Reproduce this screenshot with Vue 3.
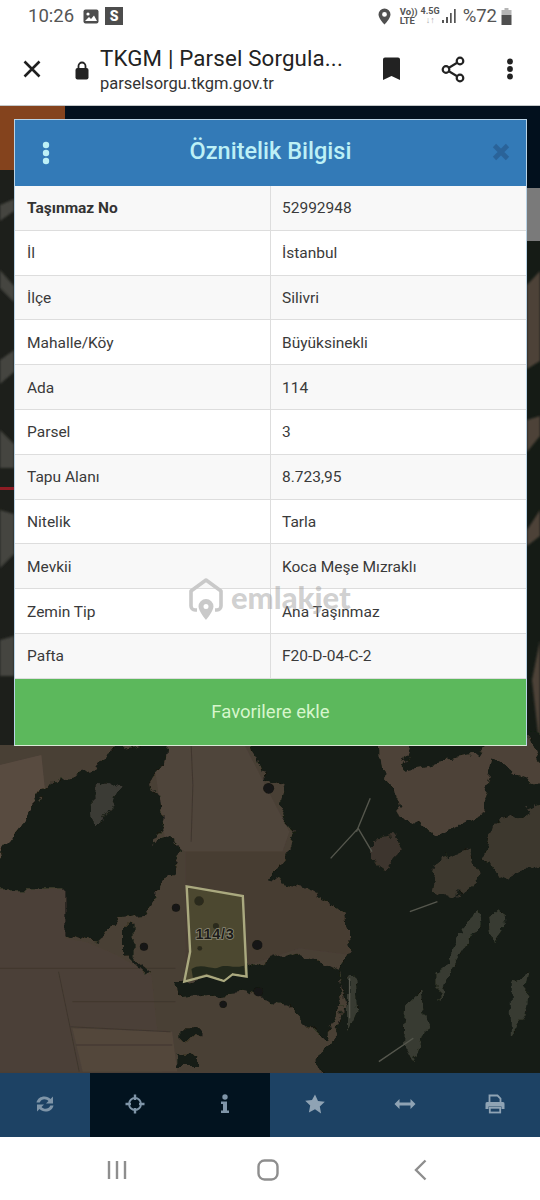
<template>
  <div class="page">
    <div class="status-bar">
      <div class="status-left">
        <span class="clock">10:26</span>
        <svg class="pic-icon" width="16" height="15" viewBox="0 0 16 15">
          <rect x="0.5" y="0.5" width="15" height="14" rx="2" fill="#4d4d4d" />
          <circle cx="5" cy="5" r="1.6" fill="#fff" />
          <path d="M2 12l4-4 2 2 3-3.5 3 5.5z" fill="#fff" />
        </svg>
        <span class="s-badge">S</span>
      </div>
      <div class="status-right">
        <svg width="13" height="17" viewBox="0 0 13 17">
          <path d="M6.5.5a6 6 0 0 0-6 6c0 4 6 10 6 10s6-6 6-10a6 6 0 0 0-6-6zm0 8.300a2.400 2.400 0 1 1 0-4.800 2.400 2.400 0 0 1 0 4.800z" fill="#4f4f4f" />
        </svg>
        <div class="net-label vo">Vo))<br />LTE</div>
        <div class="net-label g45">4.5G<br /><span class="arrows">↓↑</span></div>
        <svg class="signal" width="14" height="16" viewBox="0 0 14 16">
          <rect x="0" y="12" width="2" height="3" fill="#555" />
          <rect x="4" y="9" width="2" height="6" fill="#555" />
          <rect x="8" y="5" width="1.7" height="10" fill="#555" />
          <rect x="12" y="1" width="1.7" height="14" fill="#555" />
        </svg>
        <span class="percent">%72</span>
        <svg width="11" height="17" viewBox="0 0 11 17">
          <rect x="3.5" y="0" width="4" height="2" fill="#b5b5b5" />
          <rect x="0.5" y="2" width="10" height="5" fill="#b5b5b5" />
          <rect x="0.5" y="7" width="10" height="10" fill="#4f4f4f" />
        </svg>
      </div>
    </div>

    <div class="browser-bar">
      <svg class="close-icon" width="20" height="20" viewBox="0 0 20 20">
        <path d="M2.5 2.5l15 15M17.5 2.5l-15 15" stroke="#1f1f1f" stroke-width="2.6" fill="none" />
      </svg>
      <svg class="lock-icon" width="14" height="19" viewBox="0 0 14 19">
        <path d="M3.5 8V5a3.500 3.500 0 0 1 7 0v3" stroke="#222" stroke-width="1.8" fill="none" />
        <rect x="0.5" y="7" width="13" height="11.5" rx="2" fill="#222" />
      </svg>
      <div class="url-block">
        <div class="page-title">TKGM | Parsel Sorgula...</div>
        <div class="page-url">parselsorgu.tkgm.gov.tr</div>
      </div>
      <svg class="bookmark" width="19" height="24" viewBox="0 0 19 24">
        <path d="M1 2.500a2 2 0 0 1 2-2h13a2 2 0 0 1 2 2V23l-8.500-4L1 23z" fill="#222" />
      </svg>
      <svg class="share" width="24" height="27" viewBox="0 0 24 27">
        <path d="M19 5L5 13.500 19 22" stroke="#222" stroke-width="2.2" fill="none" />
        <circle cx="19" cy="5" r="3.3" fill="#fff" stroke="#222" stroke-width="2.2" />
        <circle cx="5" cy="13.5" r="3.3" fill="#fff" stroke="#222" stroke-width="2.2" />
        <circle cx="19" cy="22" r="3.3" fill="#fff" stroke="#222" stroke-width="2.2" />
      </svg>
      <svg class="more" width="8" height="22" viewBox="0 0 8 22">
        <circle cx="4" cy="3.5" r="2.9" fill="#222" />
        <circle cx="4" cy="11" r="2.9" fill="#222" />
        <circle cx="4" cy="18.5" r="2.9" fill="#222" />
      </svg>
    </div>

    <div class="map">
      <svg class="map-art" width="540" height="967" viewBox="0 106 540 967">
        <defs>
          <filter id="soft"><feGaussianBlur stdDeviation="1.1" /></filter>
          <filter id="rough" x="-5%" y="-5%" width="110%" height="110%">
            <feTurbulence type="fractalNoise" baseFrequency="0.022" numOctaves="3" seed="4" result="n" />
            <feDisplacementMap in="SourceGraphic" in2="n" scale="46" xChannelSelector="R" yChannelSelector="G" />
            <feGaussianBlur stdDeviation="1.6" />
          </filter>
        </defs>
        <rect x="0" y="106" width="540" height="967" fill="#4a3f36" />
        <rect x="0" y="106" width="540" height="82" fill="#02101d" />
        <rect x="0" y="106" width="65" height="64" fill="#84431d" />
        <rect x="0" y="170" width="14" height="580" fill="#1d1f1b" />
        <path d="M0 205l14-6v12l-14 10zM0 270l14 16v16l-14-14zM0 360l14-10v22l-14 12zM0 430l14 14v24H0zM0 510l14 4v40l-14 14zM0 640l14-4v40H0z" fill="#45453f" filter="url(#soft)" />
        <rect x="0" y="487" width="14" height="3" fill="#8e1c24" />
        <rect x="527" y="188" width="13" height="53" fill="#7a7a7a" />
        <rect x="527" y="241" width="13" height="510" fill="#151b15" />
        <path d="M527 285l13-14 0 90-13 8zM527 420l13-4v20l-13 16zM527 530l13-20v26l-13 10zM540 640l-8 40 8 70z" fill="#4d4339" filter="url(#soft)" />

        <g transform="translate(0 745) scale(0.3444 0.3333)">
          <g filter="url(#soft)">
            <rect x="0" y="0" width="1568" height="984" fill="#4a3f36" />
            <path d="M0 60l120-30 10 100-70 130-60 100z" fill="#594c41" />
            <path d="M440 0h270l130 260-20 60H540l-60-30z" fill="#50453b" />
            <path d="M540 320h290l180 180 10 130-150-20-150 50-180 30z" fill="#463c33" />
            <path d="M0 430h190v150l60 10 90 40 100 60 30 290H0z" fill="#4c4137" />
            <path d="M210 850l290 10 15 120H240z" fill="#52463b" />
            <path d="M205 845l290 15M170 680l60 300M0 670h510M210 770h300M220 900h280M555 0l5 120-5 170" stroke="#3f362e" stroke-width="3" fill="none" />
          </g>

          <g filter="url(#rough)">
            <path d="M-40 375L60 240 130 130 170 100 280 70 310 20 480 -20 470 60 430 120 470 150 475 220 450 290 490 275 535 310 510 370 470 420 420 510 340 520 290 590 250 585 190 560 190 430H-40z" fill="#141a12" />
            <path d="M265 150l45-40 40 20-50 110-30 10z" fill="#3b3a34" />
            <path d="M720 -40H1640V1040H960L920 950 950 900 1010 790 980 680 1020 610 1000 500 930 465 920 440 780 400 830 340 850 260 810 210 830 110 760 90z" fill="#131a12" />
            <path d="M515 712L720 670 860 620 980 680 1000 790 940 880 840 780 700 740 520 760z" fill="#131a12" />
            <path d="M1100 -20H1200L1170 70 1390 30 1420 -20H1540L1600 130 1500 90 1430 40 1400 170 1410 200 1270 270 1170 220 1150 130 1110 80z" fill="#4e4339" />
            <path d="M1270 340l100-30 20 90-70 60-70-20zM1440 230l168-70v190l-160 50-40-70z" fill="#3d382f" />
            <path d="M1080 280l60-10 30 40-60 80-30-50z" fill="#3d352d" />
            <path d="M1270 690l110-190 10 40-90 150-30 80zM1180 780l40-40 20 100-40 110-30-60zM1480 720l60-40-20 130-40 60zM1010 700l15-20 10 120-25 60zM1420 520l30-30 10 70-30 40z" fill="#383b31" />
            <path d="M360 545h25v90l60 55-15 5-70-70zM515 850h70v30h-70zM515 935h60v25h-60z" fill="#181b14" />
          </g>
          <path d="M1035 260l40-100M960 340l80-90 40 70M1190 500l80-30M1100 950l100-70M1015 700v120" stroke="#55574d" stroke-width="4" fill="none" filter="url(#soft)" />

          <g filter="url(#soft)">
            <circle cx="511" cy="488" r="12" fill="#141512" />
            <circle cx="418" cy="605" r="12" fill="#141512" />
            <circle cx="747" cy="600" r="15" fill="#141512" />
            <circle cx="648" cy="778" r="11" fill="#141512" />
            <circle cx="780" cy="130" r="16" fill="#141512" />
            <circle cx="750" cy="740" r="14" fill="#141512" />
          </g>

          <path d="M542 424L705 453 716 695 675 688 650 708 600 692 535 710 552 620z" fill="#4c4830" stroke="#aaa97f" stroke-width="7" />
          <path d="M556 672c30-20 60 5 80-5s40 5 72-5l3 28-36-6-25 20-50-18-40 12z" fill="#23291c" />
          <g filter="url(#soft)">
            <circle cx="578" cy="468" r="14" fill="#2c2a1b" />
            <circle cx="627" cy="543" r="9" fill="#2c2a1b" />
            <circle cx="580" cy="610" r="7" fill="#2c2a1b" />
          </g>
        </g>
        <text class="parcel-label" x="215" y="939" text-anchor="middle">114/3</text>
      </svg>

      <div class="modal">
        <div class="modal-header">
          <svg class="modal-dots" width="10" height="24" viewBox="0 0 10 24">
            <circle cx="5" cy="4" r="3.2" fill="#bdf0f6" />
            <circle cx="5" cy="12" r="3.2" fill="#bdf0f6" />
            <circle cx="5" cy="20" r="3.2" fill="#bdf0f6" />
          </svg>
          <span class="modal-title">Öznitelik Bilgisi</span>
          <svg class="modal-close" width="18" height="18" viewBox="0 0 18 18">
            <path d="M2.500 2.500l13 13M15.500 2.500l-13 13" stroke="#2a6399" stroke-width="4.6" fill="none" />
          </svg>
        </div>

        <div class="table">
          <div v-for="(row, i) in rows" :key="row.label" :class="['row', { odd: i % 2 === 0 }]">
            <div :class="['cell', 'cell-label', { strong: i === 0 }]">{{ row.label }}</div>
            <div class="cell cell-value">{{ row.value }}</div>
          </div>
          <div class="watermark">
            <svg width="34" height="44" viewBox="0 0 34 44">
              <path d="M8 32H6a4 4 0 0 1-4-4V13L17 2l15 11v15a4 4 0 0 1-4 4h-2" stroke="#c9c9c9" stroke-width="3.6" fill="none" stroke-linejoin="round" />
              <path d="M17 21a7.500 7.500 0 0 0-7.500 7.500C9.500 33 17 42 17 42s7.500-9 7.500-13.500A7.500 7.500 0 0 0 17 21zm0 10a2.500 2.500 0 1 1 0-5 2.500 2.500 0 0 1 0 5z" fill="#c9c9c9" />
            </svg>
            <span class="watermark-text">emlakjet</span>
          </div>
        </div>

        <div class="fav-button">Favorilere ekle</div>
      </div>
    </div>

    <div class="toolbar">
      <div class="tool">
        <svg width="20" height="20" viewBox="0 0 20 20">
          <path d="M1.500 8.500C2.500 4.500 5.500 2.500 9.500 2.500c2.500 0 4.500 1 6 2.500l2.500-2.500v7h-7l2.500-2.500c-1-1-2.500-1.800-4-1.800-2 0-4 1.200-4.800 3.300zM18.500 11.500c-1 4-4 6-8 6-2.500 0-4.500-1-6-2.500L2 17.500v-7h7l-2.500 2.500c1 1 2.500 1.800 4 1.800 2 0 4-1.200 4.800-3.300z" fill="#7f95a8" />
        </svg>
      </div>
      <div class="tool active">
        <svg width="20" height="20" viewBox="0 0 20 20">
          <circle cx="10" cy="10" r="6" fill="none" stroke="#7f95a8" stroke-width="1.8" />
          <path d="M10 0.500v5.500M10 14v5.500M0.500 10H6M14 10h5.500" stroke="#7f95a8" stroke-width="2.4" />
        </svg>
      </div>
      <div class="tool active">
        <svg width="10" height="20" viewBox="0 0 10 20">
          <circle cx="5" cy="3" r="2.7" fill="#7f95a8" />
          <path d="M1 7.500h6v9h2V19H1v-2.500h2V10H1z" fill="#7f95a8" />
        </svg>
      </div>
      <div class="tool">
        <svg width="20" height="20" viewBox="0 0 20 20">
          <path d="M10 0.500l3 6.400 6.800.9-5 4.800 1.300 6.900L10 15.200l-6.100 3.300 1.300-6.900-5-4.800 6.800-.9z" fill="#8fa3b4" />
        </svg>
      </div>
      <div class="tool">
        <svg width="22" height="12" viewBox="0 0 22 12">
          <path d="M0.500 6L5.500 1v3.500h11V1l5 5-5 5V7.500h-11V11z" fill="#8fa3b4" />
        </svg>
      </div>
      <div class="tool">
        <svg width="20" height="20" viewBox="0 0 20 20">
          <path d="M4.500 8V1.500h8l3 3V8" fill="none" stroke="#8fa3b4" stroke-width="1.8" />
          <path d="M2.500 8h15A1.800 1.800 0 0 1 19.500 10v5h-3v-2.500h-13V15h-3v-5A1.800 1.800 0 0 1 2.500 8z" fill="#8fa3b4" />
          <rect x="4.800" y="13.800" width="10.400" height="4.700" fill="none" stroke="#8fa3b4" stroke-width="1.8" />
        </svg>
      </div>
    </div>

    <div class="nav-bar">
      <svg class="nav-recent" width="20" height="20" viewBox="0 0 20 20">
        <path d="M2 1v18M10 1v18M18 1v18" stroke="#8e8e8e" stroke-width="2.4" fill="none" />
      </svg>
      <svg class="nav-home" width="22" height="22" viewBox="0 0 22 22">
        <rect x="1.5" y="1.5" width="19" height="19" rx="6" stroke="#8e8e8e" stroke-width="2.4" fill="none" />
      </svg>
      <svg class="nav-back" width="13" height="22" viewBox="0 0 13 22">
        <path d="M11.500 1.500L2 11l9.500 9.500" stroke="#8e8e8e" stroke-width="2.4" fill="none" />
      </svg>
    </div>
  </div>
</template>

<script setup>
const rows = [
  { label: 'Taşınmaz No', value: '52992948' },
  { label: 'İl', value: 'İstanbul' },
  { label: 'İlçe', value: 'Silivri' },
  { label: 'Mahalle/Köy', value: 'Büyüksinekli' },
  { label: 'Ada', value: '114' },
  { label: 'Parsel', value: '3' },
  { label: 'Tapu Alanı', value: '8.723,95' },
  { label: 'Nitelik', value: 'Tarla' },
  { label: 'Mevkii', value: 'Koca Meşe Mızraklı' },
  { label: 'Zemin Tip', value: 'Ana Taşınmaz' },
  { label: 'Pafta', value: 'F20-D-04-C-2' }
]
</script>

<style>
html,
body {
  margin: 0;
  background: #fff;
  overflow: hidden;
}
</style>

<style scoped>
.page {
  width: 540px;
  height: 1200px;
  display: flex;
  flex-direction: column;
  font-family: Roboto, "Liberation Sans", sans-serif;
  background: #fff;
  overflow: hidden;
}

.status-bar {
  height: 35px;
  box-sizing: border-box;
  flex-shrink: 0;
  display: flex;
  align-items: center;
  justify-content: space-between;
  padding: 0 28px 3px 28px;
  color: #555;
}

.status-left,
.status-right {
  display: flex;
  align-items: center;
}

.clock {
  font-size: 18.5px;
  margin-right: 9px;
}

.s-badge {
  width: 18px;
  height: 18px;
  margin-left: 6px;
  background: #4d4d4d;
  color: #fff;
  font-size: 14px;
  font-weight: 900;
  line-height: 18px;
  text-align: center;
}

.net-label {
  font-weight: 700;
  line-height: 9px;
  color: #555;
}

.vo {
  margin-left: 9px;
  width: 20px;
  font-size: 9.5px;
}

.g45 {
  width: 21px;
  text-align: center;
  font-size: 9px;
}

.arrows {
  color: #aaa;
}

.signal {
  margin-left: 1px;
}

.percent {
  font-size: 18.5px;
  margin: 0 4px 0 7px;
}

.browser-bar {
  height: 71px;
  flex-shrink: 0;
  display: flex;
  align-items: center;
  box-sizing: border-box;
  border-bottom: 1px solid #c4c8c9;
  padding-bottom: 2px;
}

.close-icon {
  margin-left: 22px;
}

.lock-icon {
  margin-left: 33px;
  margin-top: 2px;
}

.url-block {
  margin-left: 11px;
  width: 271px;
  color: #222;
}

.page-title {
  font-size: 22.3px;
  line-height: 27px;
  white-space: nowrap;
  letter-spacing: 0.15px;
}

.page-url {
  font-size: 16.5px;
  line-height: 21px;
  margin-top: 1px;
  color: #333;
  white-space: nowrap;
}

.bookmark {
  margin-left: 11px;
}

.share {
  margin-left: 40px;
}

.more {
  margin-left: 41px;
}

.map {
  position: relative;
  height: 967px;
  flex-shrink: 0;
  overflow: hidden;
}

.map-art {
  display: block;
}

.parcel-label {
  font-family: "Liberation Sans", sans-serif;
  font-size: 14.5px;
  font-weight: 700;
  letter-spacing: 0.7px;
  fill: #1c1c18;
  stroke: #8d8a78;
  stroke-width: 1.5px;
  paint-order: stroke;
}

.modal {
  position: absolute;
  top: 13px;
  left: 14px;
  width: 513px;
  box-sizing: border-box;
  border: 1px solid #b9d3e6;
  border-bottom-color: #d9ead5;
  background: #fff;
}

.modal-header {
  height: 66px;
  box-sizing: border-box;
  padding-bottom: 5px;
  background: #337ab7;
  display: flex;
  align-items: center;
  justify-content: center;
  position: relative;
}

.modal-title {
  font-size: 23.5px;
  font-weight: 500;
  color: #bdf0f6;
}

.modal-dots {
  position: absolute;
  left: 26px;
  top: 21px;
}

.modal-close {
  position: absolute;
  right: 16px;
  top: 23px;
}

.table {
  position: relative;
}

.row {
  display: grid;
  grid-template-columns: 256px 1fr;
  height: 44.8px;
  box-sizing: border-box;
  border-bottom: 1px solid #ddd;
  background: #fff;
  color: #3a3a3a;
  font-size: 15.5px;
}

.row.odd {
  background: #f8f8f8;
}

.cell {
  display: flex;
  align-items: center;
  padding: 1px 0 0 12px;
}

.cell-value {
  padding-left: 11px;
}

.cell-label {
  border-right: 1px solid #ddd;
}

.strong {
  font-weight: 700;
  color: #333;
}

.watermark {
  position: absolute;
  left: 174px;
  top: 392px;
  display: flex;
  align-items: center;
  gap: 8px;
  pointer-events: none;
}

.watermark-text {
  font-family: Lato, sans-serif;
  font-size: 31px;
  font-weight: 900;
  color: rgba(150, 150, 150, 0.45);
  margin-top: -6px;
}

.fav-button {
  height: 66px;
  background: #5cb85c;
  color: #d6f6cc;
  font-size: 18.5px;
  display: flex;
  align-items: center;
  justify-content: center;
}

.toolbar {
  height: 64px;
  flex-shrink: 0;
  display: grid;
  grid-template-columns: repeat(6, 1fr);
  background: #1d4264;
}

.tool {
  display: flex;
  align-items: center;
  justify-content: center;
  padding-bottom: 2px;
}

.tool.active {
  background: #02131f;
}

.nav-bar {
  height: 63px;
  flex-shrink: 0;
  display: flex;
  align-items: center;
  padding-top: 3px;
  box-sizing: border-box;
}

.nav-recent {
  margin-left: 107px;
}

.nav-home {
  margin-left: 130px;
}

.nav-back {
  margin-left: 135px;
}
</style>
